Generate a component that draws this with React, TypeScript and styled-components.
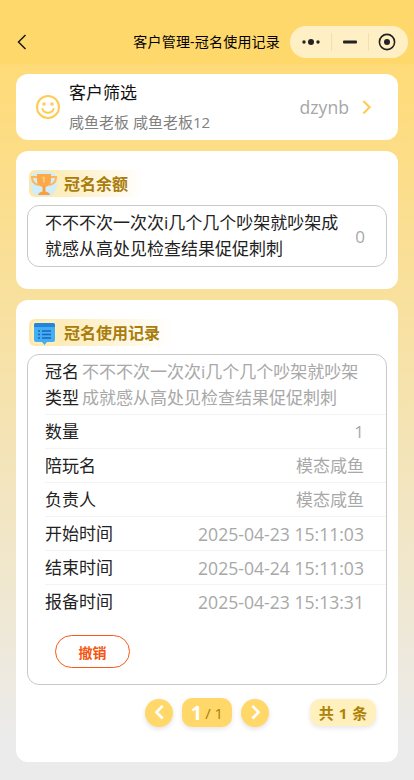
import React from 'react';
import styled, { createGlobalStyle } from 'styled-components';

const FONT = `"Open Sans", "Noto Sans CJK SC", sans-serif`;

const GlobalStyle = createGlobalStyle`
    html, body {
        margin: 0;
        padding: 0;
        font-family: ${FONT};
    }
    * {
        box-sizing: border-box;
    }
`;

const Page = styled.div`
    width: 414px;
    height: 780px;
    overflow: hidden;
    background: linear-gradient(180deg, #ffdb78 64px, #f7e1a4 340px, #ebebeb 740px);
`;

const Header = styled.div`
    height: 64px;
    padding: 26px 6px 0 17px;
    background: #ffd86c;
    display: flex;
    align-items: flex-start;
`;

const BackButton = styled.div`
    height: 32px;
    display: flex;
    align-items: center;
    color: #1a1a1a;
`;

const HeaderTitle = styled.div`
    margin-left: auto;
    margin-right: 10px;
    height: 32px;
    line-height: 32px;
    font-size: 14px;
    letter-spacing: 0.2px;
    color: #000;
`;

const Capsule = styled.div`
    width: 118px;
    height: 32px;
    padding-right: 4px;
    border-radius: 16px;
    background: rgba(255, 255, 255, 0.6);
    display: grid;
    grid-template-columns: 41px 37px 1fr;
    align-items: center;
    justify-items: center;
`;

const CapsuleCell = styled.div<{ $divider?: boolean }>`
    width: 100%;
    height: 18px;
    display: flex;
    align-items: center;
    justify-content: center;
    border-left: ${p => (p.$divider ? '1px solid rgba(0,0,0,.06)' : 'none')};
`;

const Content = styled.div`
    padding: 10px 16px 0;
    display: flex;
    flex-direction: column;
    gap: 11px;
`;

const Card = styled.div<{ $pb: number }>`
    background: #fff;
    border-radius: 12px;
    padding: 19px 11px ${p => p.$pb}px;
`;

const FilterCard = styled.div`
    height: 66px;
    background: #fff;
    border-radius: 12px;
    padding: 0 27px 0 20px;
    display: flex;
    align-items: center;
`;

const FilterText = styled.div`
    margin-left: 9px;
    padding-bottom: 1px;
    flex: 1;
`;

const FilterTitle = styled.div`
    font-size: 17px;
    line-height: 24px;
    color: #111;
`;

const FilterSub = styled.div`
    margin-top: 7px;
    font-size: 15px;
    line-height: 20px;
    color: #808080;
`;

const FilterValue = styled.div`
    font-size: 17.6px;
    color: #a6a6a6;
    margin-right: 13px;
`;

const TitleChip = styled.div<{ $w: number }>`
    width: ${p => p.$w}px;
    height: 27px;
    margin-left: 2px;
    margin-bottom: 8px;
    display: flex;
    align-items: center;
    gap: 5px;
    background: linear-gradient(90deg, #fde7a9 0%, #fdf0c8 40%, rgba(255, 255, 255, 0) 100%);
    border-radius: 6px;
    font-size: 16px;
    line-height: 24px;
    font-weight: 700;
    color: #a97c0c;
`;

const Box = styled.div`
    border: 1px solid #c9c9c9;
    border-radius: 12px;
`;

const BalanceRow = styled.div`
    padding: 4px 21px 4px 17px;
    display: flex;
    align-items: center;
    justify-content: space-between;
`;

const BalanceName = styled.div`
    width: 298px;
    font-size: 17px;
    line-height: 26px;
    color: #222;
`;

const MutedValue = styled.span<{ $date?: boolean }>`
    font-size: ${p => (p.$date ? '17.6px' : '17px')};
    color: #a8a8a8;
`;

const NameRow = styled.div`
    margin-left: 17px;
    padding: 4px 20px 3px 0;
    font-size: 17px;
    line-height: 26px;
    word-spacing: -1.5px;
    color: #222;
    border-bottom: 1px solid #f3f3f3;
`;

const Row = styled.div<{ $last?: boolean }>`
    height: 34px;
    margin-left: 17px;
    padding-right: 22px;
    display: flex;
    align-items: center;
    justify-content: space-between;
    font-size: 17px;
    line-height: 24px;
    color: #222;
    border-bottom: ${p => (p.$last ? 'none' : '1px solid #f3f3f3')};
`;

const CancelButton = styled.button`
    display: block;
    width: 75px;
    height: 33px;
    margin: 16px 0 16px 27px;
    padding: 0;
    background: #fff;
    border: 1px solid #f9591a;
    border-radius: 17px;
    color: #f4560f;
    font-family: ${FONT};
    font-size: 14px;
    font-weight: 700;
`;

const Pager = styled.div`
    margin-top: 13px;
    padding-left: 118px;
    display: flex;
    align-items: center;
    gap: 9px;
`;

const RoundButton = styled.div`
    width: 28px;
    height: 28px;
    border-radius: 50%;
    background: #ffd869;
    box-shadow: 0 2px 5px rgba(0, 0, 0, 0.12);
    display: flex;
    align-items: center;
    justify-content: center;
`;

const PageNumber = styled.div`
    width: 50px;
    height: 29px;
    border-radius: 10px;
    background: #ffd869;
    box-shadow: 0 2px 5px rgba(0, 0, 0, 0.1);
    display: flex;
    align-items: center;
    justify-content: center;
    gap: 3px;
    font-size: 15px;
    color: #a97c0c;
`;

const CurrentPage = styled.span`
    font-size: 20px;
    font-weight: 700;
    color: #fff;
`;

const TotalPill = styled.div`
    width: 66px;
    height: 27px;
    margin-left: 32px;
    border-radius: 10px;
    background: #fff0bd;
    box-shadow: 0 2px 5px rgba(0, 0, 0, 0.1);
    display: flex;
    align-items: center;
    justify-content: center;
    gap: 5px;
    font-size: 15px;
    font-weight: 700;
    color: #ad8208;
`;

const Chevron = ({ dir, color, size, width }: { dir: 'l' | 'r'; color: string; size: number; width: number }) => (
    <svg width={size} height={size * 1.6} viewBox="0 0 10 16" fill="none">
        <path
            d={dir === 'l' ? 'M8.5 1 L1.5 8 L8.5 15' : 'M1.5 1 L8.5 8 L1.5 15'}
            stroke={color}
            strokeWidth={width}
        />
    </svg>
);

const Smiley = () => (
    <svg width="24" height="24" viewBox="0 0 24 24" fill="none" stroke="#ffcb52" strokeWidth="2">
        <circle cx="12" cy="12" r="11" />
        <path d="M6.5 14 C8 19 16 19 17.5 14" strokeLinecap="round" />
        <circle cx="8" cy="9" r="0.8" fill="#ffcb52" />
        <circle cx="16" cy="9" r="0.8" fill="#ffcb52" />
    </svg>
);

const TrophyIcon = () => (
    <svg width="30" height="28" viewBox="0 0 30 28">
        <path
            d="M5 3 Q9 0 14 2 Q20 0 24 3 Q29 6 27 11 Q30 17 26 20 Q24 27 18 26 Q12 28 8 25 Q2 24 3 18 Q0 13 3 9 Q2 5 5 3Z"
            fill="#cfeefa"
        />
        <path d="M9 7 H3 Q3 14 10 15 M21 7 H27 Q27 14 20 15" fill="none" stroke="#fdb75a" strokeWidth="2" />
        <path d="M8 4 H22 V10 Q22 17 15 17 Q8 17 8 10Z" fill="#fda94a" />
        <rect x="13.5" y="16" width="3" height="6" fill="#fb9f3d" />
        <path d="M9 25 Q9.5 21.5 15 21.5 Q20.5 21.5 21 25Z" fill="#fb9f3d" />
        <path d="M15 7 V12.5 M13.5 8.2 L15 7" stroke="#ffd77f" strokeWidth="1.3" fill="none" />
    </svg>
);

const NotesIcon = () => (
    <svg width="30" height="28" viewBox="0 0 30 28">
        <path d="M5 2 H12 L18 1 H26 Q29 6 27 12 Q29 18 26 25 H5 Q1 18 3 13 Q1 7 5 2Z" fill="#fdeebb" />
        <path d="M7 4 Q5 4 5 6 V21 Q5 23 7 23 H13 L15.5 26 L18 23 H24 Q26 23 26 21 V6 Q26 4 24 4Z" fill="#45aef2" />
        <path d="M5 6 Q5 4 7 4 H24 Q26 4 26 6 V8 H5Z" fill="#2385dc" />
        <path d="M13 12 H22 M13 15.5 H22 M13 19 H22" stroke="#1766c0" strokeWidth="1.6" />
        <path d="M9 12 H11 M9 15.5 H11 M9 19 H11" stroke="#1766c0" strokeWidth="1.6" />
    </svg>
);

const records = [
    ['数量', '1'],
    ['陪玩名', '模态咸鱼'],
    ['负责人', '模态咸鱼'],
    ['开始时间', '2025-04-23 15:11:03'],
    ['结束时间', '2025-04-24 15:11:03'],
    ['报备时间', '2025-04-23 15:13:31'],
];

const App = () => (
    <Page>
        <GlobalStyle />
        <Header>
            <BackButton>
                <Chevron dir="l" color="#1a1a1a" size={10} width={1.5} />
            </BackButton>
            <HeaderTitle>客户管理-冠名使用记录</HeaderTitle>
            <Capsule>
                <CapsuleCell>
                    <svg width="20" height="8" viewBox="0 0 20 8" fill="#222">
                        <circle cx="3" cy="4" r="1.7" />
                        <circle cx="10" cy="4" r="3" />
                        <circle cx="17" cy="4" r="1.7" />
                    </svg>
                </CapsuleCell>
                <CapsuleCell $divider>
                    <svg width="14" height="4" viewBox="0 0 14 4" fill="#222">
                        <rect width="14" height="3" y="0.5" rx="1" />
                    </svg>
                </CapsuleCell>
                <CapsuleCell $divider>
                    <svg width="18" height="18" viewBox="0 0 18 18" fill="none">
                        <circle cx="9" cy="9" r="7.6" stroke="#222" strokeWidth="1.6" />
                        <circle cx="9" cy="9" r="3" fill="#222" />
                    </svg>
                </CapsuleCell>
            </Capsule>
        </Header>
        <Content>
            <FilterCard>
                <Smiley />
                <FilterText>
                    <FilterTitle>客户筛选</FilterTitle>
                    <FilterSub>咸鱼老板 咸鱼老板12</FilterSub>
                </FilterText>
                <FilterValue>dzynb</FilterValue>
                <Chevron dir="r" color="#ffcb52" size={9} width={2.4} />
            </FilterCard>

            <Card $pb={22}>
                <TitleChip $w={114}>
                    <TrophyIcon />
                    冠名余额
                </TitleChip>
                <Box>
                    <BalanceRow>
                        <BalanceName>不不不次一次次i几个几个吵架就吵架成就感从高处见检查结果促促刺刺</BalanceName>
                        <MutedValue>0</MutedValue>
                    </BalanceRow>
                </Box>
            </Card>

            <Card $pb={35}>
                <TitleChip $w={144}>
                    <NotesIcon />
                    冠名使用记录
                </TitleChip>
                <Box>
                    <NameRow>
                        冠名 <MutedValue>不不不次一次次i几个几个吵架就吵架</MutedValue>
                        <br />
                        类型 <MutedValue>成就感从高处见检查结果促促刺刺</MutedValue>
                    </NameRow>
                    {records.map(([label, value], i) => (
                        <Row key={label} $last={i === records.length - 1}>
                            <span>{label}</span>
                            <MutedValue $date={value.length > 10}>{value}</MutedValue>
                        </Row>
                    ))}
                    <CancelButton>撤销</CancelButton>
                </Box>
                <Pager>
                    <RoundButton>
                        <Chevron dir="l" color="#fff" size={9} width={3} />
                    </RoundButton>
                    <PageNumber>
                        <CurrentPage>1</CurrentPage>/ 1
                    </PageNumber>
                    <RoundButton>
                        <Chevron dir="r" color="#fff" size={9} width={3} />
                    </RoundButton>
                    <TotalPill>
                        <span>共</span>
                        <span>1</span>
                        <span>条</span>
                    </TotalPill>
                </Pager>
            </Card>
        </Content>
    </Page>
);

export default App;
